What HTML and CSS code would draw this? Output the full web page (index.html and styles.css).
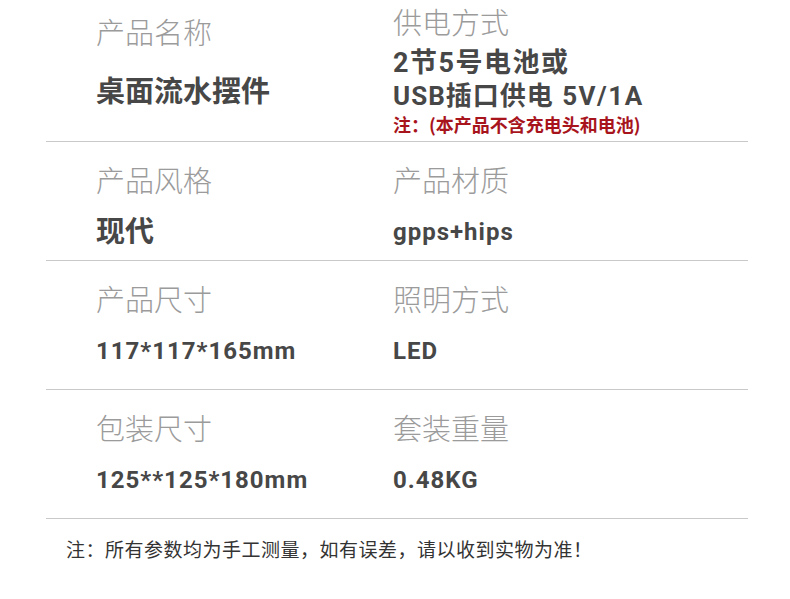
FILE: index.html
```html
<!DOCTYPE html>
<html lang="zh">
<head>
<meta charset="utf-8">
<title>产品参数</title>
<link rel="stylesheet" href="styles.css">
</head>
<body>
<div class="sheet">
  <div class="row row-first">
    <div class="cell cell-a">
      <div class="label">产品名称</div>
      <div class="val-cn val-first">桌面流水摆件</div>
    </div>
    <div class="cell cell-b">
      <div class="label">供电方式</div>
      <div class="power">
        <div class="power-line power-big">2节5号电池或</div>
        <div class="power-line">USB插口供电 <span class="spec">5V/1A</span></div>
      </div>
      <div class="warn">注：(本产品不含充电头和电池)</div>
    </div>
  </div>
  <div class="row row-short">
    <div class="cell">
      <div class="label">产品风格</div>
      <div class="val-cn">现代</div>
    </div>
    <div class="cell">
      <div class="label">产品材质</div>
      <div class="val">gpps+hips</div>
    </div>
  </div>
  <div class="row">
    <div class="cell">
      <div class="label">产品尺寸</div>
      <div class="val">117*117*165mm</div>
    </div>
    <div class="cell">
      <div class="label">照明方式</div>
      <div class="val">LED</div>
    </div>
  </div>
  <div class="row">
    <div class="cell">
      <div class="label">包装尺寸</div>
      <div class="val">125**125*180mm</div>
    </div>
    <div class="cell">
      <div class="label">套装重量</div>
      <div class="val">0.48KG</div>
    </div>
  </div>
  <p class="note">注：所有参数均为手工测量，如有误差，请以收到实物为准！</p>
</div>
</body>
</html>
```
FILE: styles.css
```css
html, body {
  margin: 0;
  padding: 0;
  background: #ffffff;
}

body {
  font-family: Roboto, "Noto Sans CJK SC", sans-serif;
  color: #474747;
}

.sheet {
  margin-left: 46px;
  width: 702px;
}

.row {
  display: grid;
  grid-template-columns: 297px 1fr;
  padding: 19px 0 21px 50px;
  border-bottom: 1px solid #c9c9c9;
}

.row-short {
  padding-bottom: 11px;
}

.row-first {
  padding-top: 0;
  padding-bottom: 0;
  height: 142px;
  box-sizing: border-box;
}

.cell {
  display: flex;
  flex-direction: column;
}

.cell-a {
  padding-top: 13px;
}

.cell-b {
  padding-top: 3px;
}

.label {
  font-family: "Noto Sans CJK SC", sans-serif;
  font-weight: 300;
  font-size: 29px;
  line-height: 36px;
  color: #9b9b9b;
}

.val {
  margin-top: 18px;
  font-family: Roboto, "Noto Sans CJK SC", sans-serif;
  font-weight: 700;
  font-size: 24px;
  line-height: 34px;
  letter-spacing: 1px;
  color: #474747;
}

.val-cn {
  margin-top: 15px;
  font-family: "Noto Sans CJK SC", sans-serif;
  font-weight: 700;
  font-size: 29px;
  line-height: 34px;
  color: #474747;
}

.val-first {
  margin-top: 23px;
}

.power {
  margin-top: 8px;
}

.power-line {
  font-family: Roboto, "Noto Sans CJK SC", sans-serif;
  font-weight: 700;
  font-size: 26px;
  line-height: 33px;
  letter-spacing: 1px;
  color: #474747;
  white-space: nowrap;
}

.power-big {
  font-size: 27px;
  letter-spacing: 1.5px;
}

.spec {
  margin-left: 1px;
  letter-spacing: 1.5px;
}

.warn {
  font-family: "Noto Sans CJK SC", sans-serif;
  font-weight: 700;
  font-size: 18px;
  line-height: 22px;
  color: #a8141c;
  white-space: nowrap;
}

.note {
  margin: 0;
  padding: 17px 0 0 20px;
  font-family: "Noto Sans CJK SC", sans-serif;
  font-weight: 400;
  font-size: 19px;
  line-height: 26px;
  letter-spacing: 0.5px;
  color: #333333;
}
```
